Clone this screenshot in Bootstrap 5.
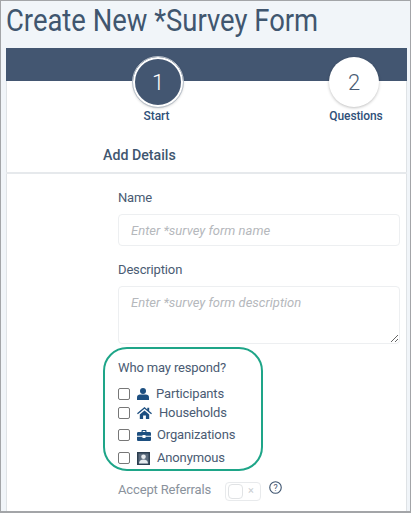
<!DOCTYPE html>
<html lang="en">
<head>
    <meta charset="UTF-8">
    <meta name="viewport" content="width=device-width, initial-scale=1.0">
    <title>Create New *Survey Form</title>
    <link href="https://cdn.jsdelivr.net/npm/bootstrap@5.3.0/dist/css/bootstrap.min.css" rel="stylesheet">
    <style>
        html, body { height: 100%; }
        body {
            font-family: Roboto, "Liberation Sans", sans-serif;
            background: #fff;
            color: #4a5b73;
            overflow: hidden;
        }
        .shot-frame {
            height: 513px;
            background: #f1f5f9;
            border: 1px solid #a3a5a8;
            border-bottom-width: 2px;
            padding: 0 3px 0 5px;
            overflow: hidden;
        }
        .page-title {
            font-size: 31px;
            line-height: 38px;
            font-weight: 400;
            color: #40566f;
            margin: 1px 0 8px;
            white-space: nowrap;
            transform: scaleX(.885);
            transform-origin: left center;
        }
        .form-panel {
            background: #fff;
            box-shadow: inset 1px 0 #dfe3e6, inset -1px 0 #dfe3e6;
            height: 470px;
        }
        .top-band { height: 33px; background: #435671; }
        .step-row {
            display: flex;
            gap: 136px;
            margin-top: -24px;
            padding-left: 122px;
            height: 67px;
        }
        .step-item { width: 60px; flex: none; display: flex; flex-direction: column; align-items: center; }
        .step-num {
            width: 50px;
            height: 50px;
            border-radius: 50%;
            background: #fff;
            color: #4a5b73;
            font-size: 22px;
            font-weight: 300;
            display: flex;
            align-items: center;
            justify-content: center;
            box-shadow: 0 1px 3px rgba(0, 0, 0, .25);
        }
        .step-num.is-active { background: #435671; color: #fff; border: 2px solid #fff; outline: 1px solid #b9c1cb; }
        .step-name { font-size: 12px; letter-spacing: -.1px; font-weight: 500; color: #2f5079; line-height: 15px; margin-top: 2px; }
        .step-item:first-child .step-name { margin-right: 3px; }
        .step-item:last-child .step-name { margin-left: 4px; }
        .section-head {
            font-size: 14.2px;
            font-weight: 500;
            color: #40566f;
            padding: 22px 0 8px 97px;
            line-height: 18px;
            border-bottom: 2px solid #e6e9ec;
        }
        .form-body { padding: 15px 7px 0 112px; }
        .field-label { font-size: 13px; letter-spacing: -.15px; line-height: 18px; color: #4a5b73; margin-bottom: 7px; display: block; }
        .form-control.soft-input {
            height: 32px;
            border: 1px solid #edeff1;
            border-radius: 4px;
            padding: 0 12px;
            font-size: 13px;
            font-style: italic;
            margin-bottom: 15px;
        }
        .form-control.soft-input.is-area { height: 58px; padding-top: 6px; margin-bottom: 0; }
        .soft-input::placeholder { color: #b5b8bc; }
        .respond-box {
            width: 160px;
            height: 124px;
            margin: 3px 0 0 -15px;
            border: 2px solid #1ea588;
            border-radius: 24px;
            padding: 10px 13px 0;
        }
        .respond-title { font-size: 13px; letter-spacing: -.15px; line-height: 18px; margin-bottom: 8px; white-space: nowrap; }
        .respond-line { display: flex; align-items: center; font-size: 13px; letter-spacing: -.15px; height: 18px; white-space: nowrap; }
        .respond-line .form-check-input {
            width: 12px;
            height: 12px;
            margin: 0 7px 0 0;
            border: 1px solid #777;
            border-radius: 2px;
            flex: none;
        }
        .respond-line svg { flex: none; margin-right: 7px; }
        .respond-line svg.tight-gap { margin-right: 6px; }
        .gap-a { margin-top: 1px; }
        .gap-b { margin-top: 4px; }
        .gap-c { margin-top: 5px; }
        .referral-row { display: flex; align-items: flex-start; margin-top: 10px; font-size: 13px; letter-spacing: -.15px; color: #8a929c; }
        .referral-row > span { line-height: 18px; }
        .toggle-box {
            width: 36px;
            height: 19px;
            margin: 1px 0 0 14px;
            border: 1px solid #e8eaec;
            border-radius: 4px;
            display: flex;
            align-items: center;
            padding-left: 2px;
            color: #c9cdd1;
            font-size: 11px;
        }
        .toggle-knob { width: 15px; height: 15px; border: 1px solid #e1e3e5; border-radius: 4px; margin-right: 5px; }
        .help-icon { margin-left: 8px; }
    </style>
</head>
<body>
<div class="shot-frame">
    <h1 class="page-title">Create New *Survey Form</h1>
    <div class="form-panel">
        <div class="top-band"></div>
        <div class="step-row">
            <div class="step-item">
                <div class="step-num is-active">1</div>
                <div class="step-name">Start</div>
            </div>
            <div class="step-item">
                <div class="step-num">2</div>
                <div class="step-name">Questions</div>
            </div>
        </div>
        <div class="section-head">Add Details</div>
        <form class="form-body">
            <label class="field-label" for="surveyName">Name</label>
            <input class="form-control soft-input" id="surveyName" type="text" placeholder="Enter *survey form name">
            <label class="field-label" for="surveyDesc">Description</label>
            <textarea class="form-control soft-input is-area" id="surveyDesc" placeholder="Enter *survey form description"></textarea>

            <div class="respond-box">
                <div class="respond-title">Who may respond?</div>
                <div class="respond-line">
                    <input class="form-check-input" type="checkbox" aria-label="Participants">
                    <svg width="12" height="12" viewBox="0 0 12 12"><circle cx="6" cy="3" r="3" fill="#1d4f80"/><path d="M0 12V9.200C0 7.400 1.400 6.600 3 6.600h6c1.600 0 3 .8 3 2.600V12z" fill="#1d4f80"/></svg>
                    <span>Participants</span>
                </div>
                <div class="respond-line gap-a">
                    <input class="form-check-input" type="checkbox" aria-label="Households">
                    <svg width="15" height="12" viewBox="0 0 15 12"><path d="M7.500 0 0 6.300l.9 1L7.500 1.800l6.600 5.500.9-1-2.800-2.300V.8h-1.900v1.700z" fill="#1d4f80"/><path d="M2.800 7.400 7.500 3.400l4.700 4V12H8.900V8.500H6.100V12H2.800z" fill="#1d4f80"/></svg>
                    <span>Households</span>
                </div>
                <div class="respond-line gap-b">
                    <input class="form-check-input" type="checkbox" aria-label="Organizations">
                    <svg class="tight-gap" width="14" height="11" viewBox="0 0 14 11"><path d="M4.500 2V1C4.500.4 4.900 0 5.500 0h3c.6 0 1 .4 1 1v1h3.200c.7 0 1.300.6 1.300 1.300V5.800H8.500v-.7h-3v.7H0V3.300C0 2.600.6 2 1.300 2zM5.700 1.100V2h2.600v-.9z" fill="#1d4f80"/><path d="M0 6.800h5.500v1.100h3V6.800H14v2.900c0 .7-.6 1.300-1.300 1.300H1.300C.6 11 0 10.400 0 9.700z" fill="#1d4f80"/></svg>
                    <span>Organizations</span>
                </div>
                <div class="respond-line gap-c">
                    <input class="form-check-input" type="checkbox" aria-label="Anonymous">
                    <svg width="13" height="13" viewBox="0 0 13 13"><rect width="13" height="13" fill="#2c3e50"/><rect x="1.500" y="1.500" width="10" height="10" fill="#5b6b7d"/><circle cx="6.500" cy="4.800" r="2.300" fill="#e6eaee"/><path d="M2 11.500c0-2.600 2-3.900 4.500-3.900s4.500 1.300 4.500 3.900z" fill="#e6eaee"/></svg>
                    <span>Anonymous</span>
                </div>
            </div>

            <div class="referral-row">
                <span>Accept Referrals</span>
                <div class="toggle-box"><div class="toggle-knob"></div>×</div>
                <svg class="help-icon" width="13" height="13" viewBox="0 0 14 14"><circle cx="7" cy="7" r="6.200" fill="none" stroke="#3f5570" stroke-width="1.200"/><text x="7" y="10.300" text-anchor="middle" font-size="9.500" font-family="Roboto" fill="#3f5570">?</text></svg>
            </div>
        </form>
    </div>
</div>
<script src="https://cdn.jsdelivr.net/npm/bootstrap@5.3.0/dist/js/bootstrap.bundle.min.js"></script>
</body>
</html>
